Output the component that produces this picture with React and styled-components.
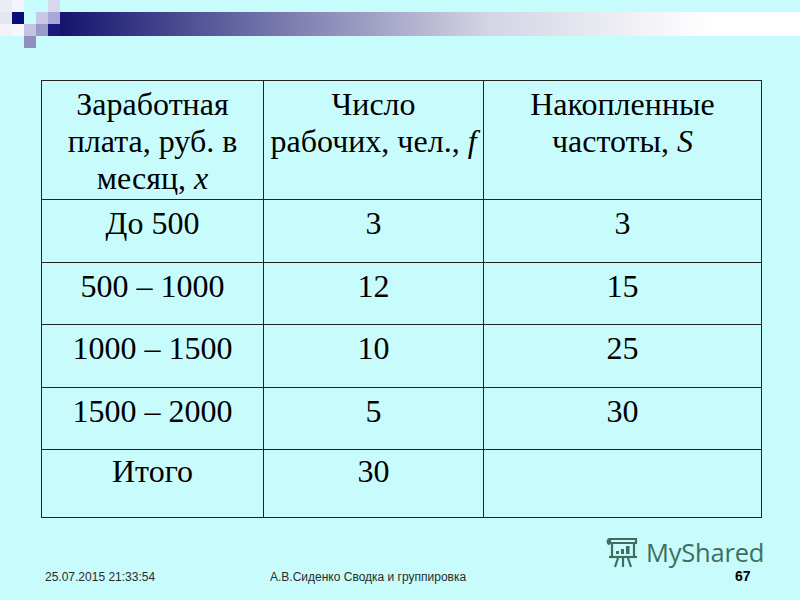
import React from "react";
import styled, { createGlobalStyle } from "styled-components";

const GlobalStyle = createGlobalStyle`
  html, body {
    margin: 0;
    padding: 0;
    background: #c8fcfc;
  }
`;

const rows = [
  ["До 500", "3", "3"],
  ["500 – 1000", "12", "15"],
  ["1000 – 1500", "10", "25"],
  ["1500 – 2000", "5", "30"],
];

// corner ornament, 12px cells, null = background
const corner = [
  ["#ececf6", "#f4f4fa", null, null, "#d8d8ec"],
  ["#e6e6f2", "#0c0c78", null, "#c8c8e8", "#a8a8d8"],
  ["#f2f2f8", "#f6f6fb", "#c4c4e2", "#9a9ac8", "#1a1a7c"],
  [null, null, "#9090c0", null, null],
];

const App = () => {
  return (
    <Slide>
      <GlobalStyle />
      <Header>
        <Corner>
          {corner.flat().map((c, i) => (
            <Cell key={i} $color={c} />
          ))}
        </Corner>
        <Bar />
      </Header>

      <Table>
        <colgroup>
          <col style={{ width: 222 }} />
          <col style={{ width: 220 }} />
          <col style={{ width: 278 }} />
        </colgroup>
        <tbody>
          <Row $h={119}>
            <Td>
              Заработная
              <br />
              плата, руб. в
              <br />
              месяц, <i>x</i>
            </Td>
            <Td>
              Число
              <br />
              рабочих, чел., <i>f</i>
            </Td>
            <Td>
              Накопленные
              <br />
              частоты, <i>S</i>
            </Td>
          </Row>
          {rows.map((r, i) => (
            <Row key={i} $h={62.5}>
              {r.map((v, j) => (
                <Td key={j}>{v}</Td>
              ))}
            </Row>
          ))}
          <Row $h={68}>
            <Td $pad={3}>Итого</Td>
            <Td $pad={3}>30</Td>
            <Td $pad={3}></Td>
          </Row>
        </tbody>
      </Table>

      <Footer>
        <Date>25.07.2015 21:33:54</Date>
        <Author>А.В.Сиденко Сводка и группировка</Author>
        <Page>67</Page>
      </Footer>

      <Watermark>
        <svg width="36" height="34" viewBox="0 0 36 34" fill="none" stroke="#3f6e60" strokeWidth="2.2">
          <path d="M5 4 h26 v4 h-26 z" />
          <path d="M5 4 c-3 0 -3 5 0 5" />
          <path d="M7 8 v14 h22 v-14" />
          <path d="M4 22 h28" />
          <path d="M18 22 v10" />
          <path d="M13 23 l-3 9" />
          <path d="M23 23 l3 9" />
          <g fill="#3f6e60" stroke="none">
            <rect x="11" y="16" width="3" height="3" />
            <rect x="16" y="14" width="3" height="5" />
            <rect x="21" y="11" width="3.5" height="8" />
          </g>
        </svg>
        <Brand>MyShared</Brand>
      </Watermark>
    </Slide>
  );
};

export default App;

const Slide = styled.div`
  position: relative;
  width: 800px;
  height: 600px;
  background: #c8fcfc;
  display: flex;
  flex-direction: column;
  overflow: hidden;
`;

const Header = styled.div`
  display: flex;
  height: 48px;
`;

const Corner = styled.div`
  display: grid;
  grid-template-columns: repeat(5, 12px);
  grid-template-rows: repeat(4, 12px);
`;

const Cell = styled.div`
  background: ${(p) => p.$color || "transparent"};
`;

const Bar = styled.div`
  flex: 1;
  margin-top: 12px;
  height: 24px;
  background: linear-gradient(
    to right,
    #14146e 0%,
    #58589a 20%,
    #d4d4e4 58%,
    #ffffff 88%
  );
`;

const Table = styled.table`
  margin: 32px 0 0 41px;
  width: 720px;
  border-collapse: collapse;
  table-layout: fixed;
  font-family: "Liberation Serif", "Times New Roman", serif;
  font-size: 32px;
  line-height: 37px;
  color: #000;
`;

const Row = styled.tr`
  height: ${(p) => p.$h}px;
`;

const Td = styled.td`
  border: 1px solid #222;
  padding: ${(p) => (p.$pad != null ? p.$pad : 5)}px 4px 0;
  text-align: center;
  vertical-align: top;

  i {
    font-style: italic;
  }
`;

const Footer = styled.div`
  margin-top: auto;
  display: flex;
  align-items: baseline;
  padding: 0 0 16px 45px;
  font-family: "Liberation Sans", Arial, sans-serif;
  font-size: 12px;
  color: #2a2a2a;
`;

const Date = styled.span`
  width: 225px;
`;

const Author = styled.span`
  width: 465px;
`;

const Page = styled.span`
  font-size: 14px;
  font-weight: bold;
  color: #000;
`;

const Watermark = styled.div`
  position: absolute;
  left: 605px;
  top: 535px;
  display: flex;
  align-items: center;
  gap: 5px;
`;

const Brand = styled.span`
  font-family: "Open Sans", sans-serif;
  font-size: 25.5px;
  color: #3f6e60;
  letter-spacing: -0.2px;
`;
